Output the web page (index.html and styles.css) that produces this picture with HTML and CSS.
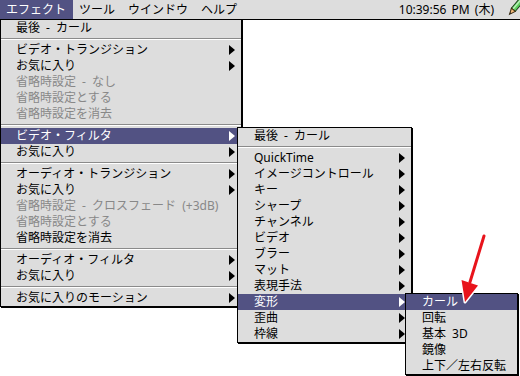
FILE: index.html
```html
<!DOCTYPE html>
<html lang="ja">
<head>
  <meta charset="UTF-8">
  <title>エフェクト メニュー</title>
  <link rel="stylesheet" href="styles.css">
</head>
<body>
  <!-- メニューバー -->
  <div class="menubar">
    <span class="title active">エフェクト</span>
    <span class="title">ツール</span>
    <span class="title">ウインドウ</span>
    <span class="title">ヘルプ</span>
    <span class="clock">10:39:56 PM (木)</span>
    <svg class="pencil" width="14" height="19" viewBox="0 0 14 19">
      <g transform="rotate(40 8 9)">
        <rect x="5.5" y="-3" width="5" height="13" fill="#5fcf5f" stroke="#1d3d1d" stroke-width="1"/>
        <rect x="6.5" y="-3" width="1.5" height="13" fill="#b8f0b8"/>
        <polygon points="5.5,10 10.5,10 8,16" fill="#f0b878" stroke="#3a2a10" stroke-width="1"/>
        <polygon points="7.2,14 8.8,14 8,16" fill="#222"/>
      </g>
    </svg>
  </div>

  <!-- エフェクト メニュー -->
  <div class="menu main">
    <div class="item">最後 - カール</div>
    <div class="sep"></div>
    <div class="item sub">ビデオ・トランジション</div>
    <div class="item sub">お気に入り</div>
    <div class="item off">省略時設定 - なし</div>
    <div class="item off">省略時設定とする</div>
    <div class="item off">省略時設定を消去</div>
    <div class="sep"></div>
    <div class="item sub on">ビデオ・フィルタ</div>
    <div class="item sub">お気に入り</div>
    <div class="sep"></div>
    <div class="item sub">オーディオ・トランジション</div>
    <div class="item sub">お気に入り</div>
    <div class="item off">省略時設定 - クロスフェード (+3dB)</div>
    <div class="item off">省略時設定とする</div>
    <div class="item">省略時設定を消去</div>
    <div class="sep"></div>
    <div class="item sub">オーディオ・フィルタ</div>
    <div class="item sub">お気に入り</div>
    <div class="sep"></div>
    <div class="item sub">お気に入りのモーション</div>
  </div>

  <!-- ビデオ・フィルタ サブメニュー -->
  <div class="menu filters">
    <div class="item">最後 - カール</div>
    <div class="sep"></div>
    <div class="item sub">QuickTime</div>
    <div class="item sub">イメージコントロール</div>
    <div class="item sub">キー</div>
    <div class="item sub">シャープ</div>
    <div class="item sub">チャンネル</div>
    <div class="item sub">ビデオ</div>
    <div class="item sub">ブラー</div>
    <div class="item sub">マット</div>
    <div class="item sub">表現手法</div>
    <div class="item sub on">変形</div>
    <div class="item sub">歪曲</div>
    <div class="item sub">枠線</div>
  </div>

  <!-- 変形 サブメニュー -->
  <div class="menu transforms">
    <div class="item on">カール</div>
    <div class="item">回転</div>
    <div class="item">基本 3D</div>
    <div class="item">鏡像</div>
    <div class="item">上下／左右反転</div>
  </div>

  <!-- 赤い矢印 -->
  <svg class="pointer" width="40" height="76" viewBox="0 0 40 76">
    <line x1="32" y1="6" x2="18" y2="52" stroke="#fff" stroke-width="5" stroke-linecap="round"/>
    <polygon points="13,72 9.5,50 26,55.5" fill="#fff" stroke="#fff" stroke-width="3" stroke-linejoin="round"/>
    <line x1="32" y1="6" x2="18" y2="52" stroke="#e8141c" stroke-width="3" stroke-linecap="round"/>
    <polygon points="13,72 9.5,50 26,55.5" fill="#e8141c"/>
  </svg>
</body>
</html>
```

FILE: styles.css
```css
* { box-sizing: border-box; margin: 0; padding: 0; }

body {
  position: relative;
  width: 520px;
  height: 376px;
  overflow: hidden;
  background: #fff;
  color: #000;
  font-family: "Noto Sans", "Noto Sans CJK JP", sans-serif;
  font-size: 12px;
}

/* メニューバー */
.menubar {
  display: flex;
  align-items: flex-start;
  height: 20px;
  background: #ddd;
  border-bottom: 1px solid #000;
}

.title {
  height: 19px;
  line-height: 19px;
  padding: 0 7px 0 6px;
}

.title.active { background: #525283; color: #fff; }

.clock {
  margin-left: auto;
  margin-right: 12px;
  line-height: 19px;
  word-spacing: 2px;
}

.pencil { display: block; }

/* メニュー共通 */
.menu {
  position: absolute;
  background: #ddd;
  border: 1px solid #000;
  box-shadow: 1px 1px 0 #000;
}

.main { left: 0; top: 19px; width: 242px; }
.filters { left: 237px; top: 127px; width: 175px; }
.transforms { left: 405px; top: 293px; width: 113px; }

.item {
  display: flex;
  justify-content: space-between;
  align-items: center;
  height: 16px;
  line-height: 16px;
  padding: 0 6px 0 15px;
  white-space: pre;
  word-spacing: 3px;
}

.filters .item,
.transforms .item { padding-left: 16px; }

.item.sub::after {
  content: "";
  border-left: 6px solid #000;
  border-top: 5px solid transparent;
  border-bottom: 5px solid transparent;
}

.item.on { background: #525283; color: #fff; }
.item.on::after { border-left-color: #fff; }
.item.off { color: #888; }

.sep {
  height: 6px;
  background: linear-gradient(to bottom, transparent 2px, #8a8a8a 2px, #8a8a8a 3px, #fff 3px, #fff 4px, transparent 4px);
}

/* 赤い矢印 */
.pointer {
  position: absolute;
  left: 452px;
  top: 230px;
}
```
